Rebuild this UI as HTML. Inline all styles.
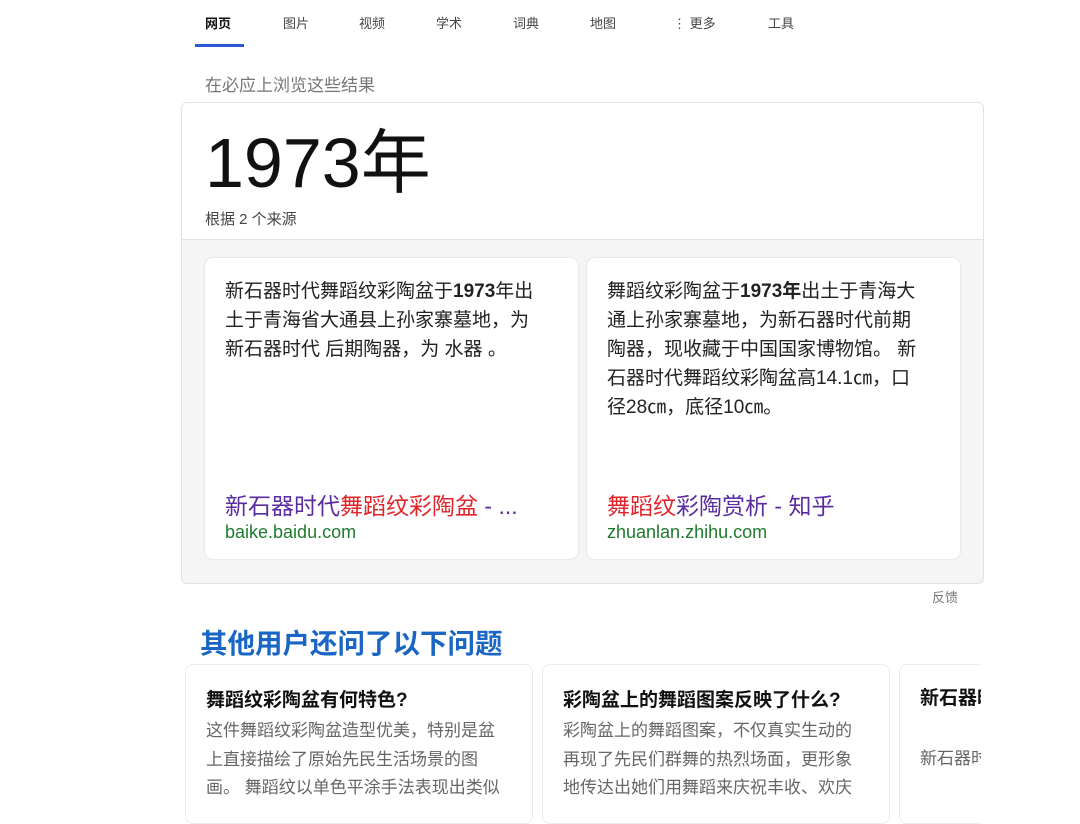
<!DOCTYPE html>
<html><head><meta charset="utf-8"><style>
*{margin:0;padding:0;box-sizing:border-box}
body{width:1080px;height:793px;overflow:hidden;background:#fff;font-family:"Liberation Sans","Noto Sans CJK SC",sans-serif;color:#222;position:relative}
.a{position:absolute;white-space:nowrap}
.nav{font-size:13px;color:#444;top:13px}
.card{position:absolute;left:181px;top:102px;width:803px;height:482px;border:1px solid #e2e2e2;border-radius:6px;background:#f5f5f5;overflow:hidden}
.top{position:absolute;left:0;top:0;width:100%;height:137px;background:#fff;border-bottom:1px solid #e2e2e2}
.ic{position:absolute;top:155px;width:373px;height:301px;background:#fff;border-radius:8px;box-shadow:0 0 2px rgba(0,0,0,.15)}
.ic p{position:absolute;left:20px;top:19px;width:320px;font-size:19px;line-height:29px;color:#222;white-space:normal}
.lt{position:absolute;left:20px;top:233px;font-size:23px;line-height:30px;color:#5a2ca0;white-space:nowrap}
.lt .r{color:#e0252b}
.url{position:absolute;left:20px;top:263px;font-size:18px;line-height:22px;color:#1e7a2e}
.q{position:absolute;top:664px;width:348px;height:160px;background:#fff;border:1px solid #ececec;border-radius:8px}
.q h3{position:absolute;left:20px;top:20px;font-size:19px;font-weight:bold;color:#111;white-space:nowrap}
.q p{position:absolute;left:20px;top:52px;width:300px;font-size:17px;line-height:28.5px;color:#666}
</style></head><body>
<div class="a nav" style="left:205px;font-weight:bold;color:#111">网页</div>
<div style="position:absolute;left:195px;top:44px;width:49px;height:3px;background:#2559d6"></div>
<div class="a nav" style="left:283px">图片</div>
<div class="a nav" style="left:359px">视频</div>
<div class="a nav" style="left:436px">学术</div>
<div class="a nav" style="left:513px">词典</div>
<div class="a nav" style="left:590px">地图</div>
<div class="a nav" style="left:673px">⋮ 更多</div>
<div class="a nav" style="left:768px">工具</div>
<div class="a" style="left:205px;top:71px;font-size:17px;color:#767676">在必应上浏览这些结果</div>
<div class="card">
 <div class="top">
  <div class="a" style="left:23px;top:20px;font-size:70px;line-height:80px;color:#111">1973年</div>
  <div class="a" style="left:23px;top:105px;font-size:15px;color:#444">根据 2 个来源</div>
 </div>
 <div class="ic" style="left:23px"><p>新石器时代舞蹈纹彩陶盆于<b>1973</b>年出土于青海省大通县上孙家寨墓地，为新石器时代 后期陶器，为 水器 。</p>
  <div class="lt">新石器时代<span class="r">舞蹈纹彩陶盆</span> - ...</div><div class="url">baike.baidu.com</div></div>
 <div class="ic" style="left:405px"><p>舞蹈纹彩陶盆于<b>1973年</b>出土于青海大通上孙家寨墓地，为新石器时代前期陶器，现收藏于中国国家博物馆。 新石器时代舞蹈纹彩陶盆高14.1㎝，口径28㎝，底径10㎝。</p>
  <div class="lt"><span class="r">舞蹈纹</span>彩陶赏析 - 知乎</div><div class="url">zhuanlan.zhihu.com</div></div>
</div>
<div class="a" style="left:932px;top:587px;font-size:13px;color:#767676">反馈</div>
<div class="a" style="left:200px;top:621px;font-size:27.5px;font-weight:bold;color:#1a66c4">其他用户还问了以下问题</div>
<div class="q" style="left:185px"><h3>舞蹈纹彩陶盆有何特色?</h3><p>这件舞蹈纹彩陶盆造型优美，特别是盆上直接描绘了原始先民生活场景的图画。 舞蹈纹以单色平涂手法表现出类似</p></div>
<div class="q" style="left:542px"><h3>彩陶盆上的舞蹈图案反映了什么?</h3><p>彩陶盆上的舞蹈图案，不仅真实生动的再现了先民们群舞的热烈场面，更形象地传达出她们用舞蹈来庆祝丰收、欢庆</p></div>
<div style="position:absolute;left:899px;top:664px;width:82px;height:160px;overflow:hidden">
<div class="q" style="left:0;top:0"><h3 style="white-space:normal;width:300px;line-height:28px;top:20px">新石器时代舞蹈纹彩陶盆收藏?</h3><p style="top:80px">新石器时代舞蹈纹彩陶盆于青海省</p></div></div>
</body></html>
